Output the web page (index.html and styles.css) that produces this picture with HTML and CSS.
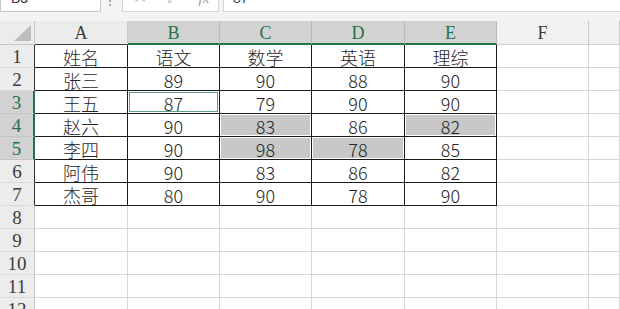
FILE: index.html
```html
<!DOCTYPE html>
<html lang="zh-CN">
<head>
<meta charset="utf-8">
<title>成绩表</title>
<link rel="stylesheet" href="styles.css">
</head>
<body>
<div class="formula-bar">
  <div class="name-box">B3</div>
  <div class="grip"><i></i><i></i></div>
  <div class="fx-box">
    <span class="fx-btn">✕</span>
    <span class="fx-btn">✓</span>
    <span class="fx-btn fx">fx</span>
  </div>
  <div class="fx-input">87</div>
</div>

<div class="sheet">
  <div class="corner"><svg width="18" height="17" viewBox="0 0 18 17"><polygon points="17,0 17,16 0,16" fill="#bdbdbd"/></svg></div>
  <div class="col-head">A</div>
  <div class="col-head sel">B</div>
  <div class="col-head sel">C</div>
  <div class="col-head sel">D</div>
  <div class="col-head sel">E</div>
  <div class="col-head plain">F</div>
  <div class="col-head plain"></div>

  <div class="row-head edge">1</div>
  <div class="cell tb">姓名</div><div class="cell tb">语文</div><div class="cell tb">数学</div><div class="cell tb">英语</div><div class="cell tb">理综</div>
  <div class="cell"></div><div class="cell"></div>

  <div class="row-head edge">2</div>
  <div class="cell tb">张三</div><div class="cell tb">89</div><div class="cell tb">90</div><div class="cell tb">88</div><div class="cell tb">90</div>
  <div class="cell"></div><div class="cell"></div>

  <div class="row-head sel">3</div>
  <div class="cell tb">王五</div><div class="cell tb active">87</div><div class="cell tb">79</div><div class="cell tb">90</div><div class="cell tb">90</div>
  <div class="cell"></div><div class="cell"></div>

  <div class="row-head sel">4</div>
  <div class="cell tb">赵六</div><div class="cell tb">90</div><div class="cell tb fill">83</div><div class="cell tb">86</div><div class="cell tb fill">82</div>
  <div class="cell"></div><div class="cell"></div>

  <div class="row-head sel">5</div>
  <div class="cell tb">李四</div><div class="cell tb">90</div><div class="cell tb fill">98</div><div class="cell tb fill">78</div><div class="cell tb">85</div>
  <div class="cell"></div><div class="cell"></div>

  <div class="row-head edge">6</div>
  <div class="cell tb">阿伟</div><div class="cell tb">90</div><div class="cell tb">83</div><div class="cell tb">86</div><div class="cell tb">82</div>
  <div class="cell"></div><div class="cell"></div>

  <div class="row-head edge">7</div>
  <div class="cell tb">杰哥</div><div class="cell tb">80</div><div class="cell tb">90</div><div class="cell tb">78</div><div class="cell tb">90</div>
  <div class="cell"></div><div class="cell"></div>

  <div class="row-head">8</div>
  <div class="cell"></div><div class="cell"></div><div class="cell"></div><div class="cell"></div><div class="cell"></div><div class="cell"></div><div class="cell"></div>
  <div class="row-head">9</div>
  <div class="cell"></div><div class="cell"></div><div class="cell"></div><div class="cell"></div><div class="cell"></div><div class="cell"></div><div class="cell"></div>
  <div class="row-head">10</div>
  <div class="cell"></div><div class="cell"></div><div class="cell"></div><div class="cell"></div><div class="cell"></div><div class="cell"></div><div class="cell"></div>
  <div class="row-head">11</div>
  <div class="cell"></div><div class="cell"></div><div class="cell"></div><div class="cell"></div><div class="cell"></div><div class="cell"></div><div class="cell"></div>
  <div class="row-head">12</div>
  <div class="cell"></div><div class="cell"></div><div class="cell"></div><div class="cell"></div><div class="cell"></div><div class="cell"></div><div class="cell"></div>
</div>
</body>
</html>
```

FILE: styles.css
```css
html, body {
  margin: 0;
  padding: 0;
}

body {
  width: 620px;
  height: 309px;
  overflow: hidden;
  background: #ffffff;
  font-family: "Liberation Sans", Arial, sans-serif;
}

/* ---------- formula bar (scrolled partly out of view) ---------- */
.formula-bar {
  height: 21px;
  background: #f3f3f3;
  display: flex;
  align-items: flex-start;
  overflow: hidden;
}

.name-box {
  box-sizing: border-box;
  width: 101px;
  height: 25px;
  margin-top: -13px;
  background: #ffffff;
  border: 1px solid #c6c6c6;
  padding-left: 10px;
  font-size: 14px;
  line-height: 20px;
  color: #333333;
}

.grip {
  width: 18px;
  display: flex;
  flex-direction: column;
  align-items: center;
  gap: 2px;
}

.grip i {
  display: block;
  width: 2px;
  height: 2px;
  background: #a8a8a8;
}

.fx-box {
  box-sizing: border-box;
  width: 97px;
  height: 25px;
  margin-top: -13px;
  margin-left: 3px;
  background: #ffffff;
  border: 1px solid #d4d4d4;
  display: flex;
  align-items: flex-start;
  padding-left: 8px;
  gap: 14px;
}

.fx-btn {
  font-size: 17px;
  line-height: 20px;
  color: #c4c4c4;
  width: 18px;
  text-align: center;
}

.fx {
  font-family: "Liberation Serif", serif;
  font-style: italic;
  font-size: 15px;
  color: #9a9a9a;
}

.fx-input {
  box-sizing: border-box;
  flex: 1;
  height: 25px;
  margin-top: -13px;
  margin-left: 4px;
  background: #ffffff;
  border: 1px solid #d4d4d4;
  border-right: none;
  padding-left: 9px;
  font-size: 14px;
  line-height: 20px;
  color: #444444;
}

/* ---------- worksheet grid ---------- */
.sheet {
  display: grid;
  grid-template-columns: 35px 93px 92px 92px 93px 92px 92px minmax(0, 1fr);
  grid-template-rows: 24px;
  grid-auto-rows: 23px;
  overflow: hidden;
}

.corner,
.col-head,
.row-head,
.cell {
  box-sizing: border-box;
  display: flex;
  align-items: center;
  justify-content: center;
  overflow: hidden;
}

.corner {
  background: #ececec;
  border-right: 1px solid #c6c6c6;
  border-bottom: 1px solid #c6c6c6;
  align-items: flex-end;
  justify-content: flex-end;
  padding: 0 2px 2px 0;
}

.corner svg {
  display: block;
}

.col-head {
  background: #ececec;
  border-right: 1px solid #c8c8c8;
  border-bottom: 1px solid #3a3a3a;
  font-family: "Liberation Serif", "Times New Roman", serif;
  font-size: 18px;
  line-height: 20px;
  color: #3c3c3c;
  padding-top: 1px;
}

.col-head.plain {
  border-bottom-color: #d0d0d0;
  background: #f1f1f1;
}

.col-head.sel {
  background: #d2d2d2;
  color: #217346;
  border-right-color: #b8b8b8;
  border-bottom: 2px solid #217346;
}

.row-head {
  background: #ececec;
  border-right: 1px solid #c6c6c6;
  border-bottom: 1px solid #dadada;
  font-family: "Liberation Serif", "Times New Roman", serif;
  font-size: 19px;
  line-height: 20px;
  color: #3c3c3c;
  padding-top: 1px;
}

.row-head.edge {
  border-right-color: #2e2e2e;
}

.row-head.sel {
  background: #d2d2d2;
  color: #217346;
  border-right: 2px solid #217346;
  border-bottom-color: #c4c4c4;
}

.cell {
  border-right: 1px solid #d6d6d6;
  border-bottom: 1px solid #d6d6d6;
  font-family: "Noto Sans CJK SC", "Noto Sans", sans-serif;
  font-weight: 300;
  font-size: 18px;
  line-height: 20px;
  color: #262626;
  padding-top: 1px;
}

/* bordered score table A1:E7 */
.cell.tb {
  border-right-color: #1a1a1a;
  border-bottom-color: #1a1a1a;
}

.cell.fill {
  background: #c8c8c8;
  box-shadow: inset 0 0 0 1px #ffffff;
}

.cell.active {
  box-shadow: inset 0 0 0 1px #ffffff, inset 0 0 0 2px #5f9f7c;
}
```
